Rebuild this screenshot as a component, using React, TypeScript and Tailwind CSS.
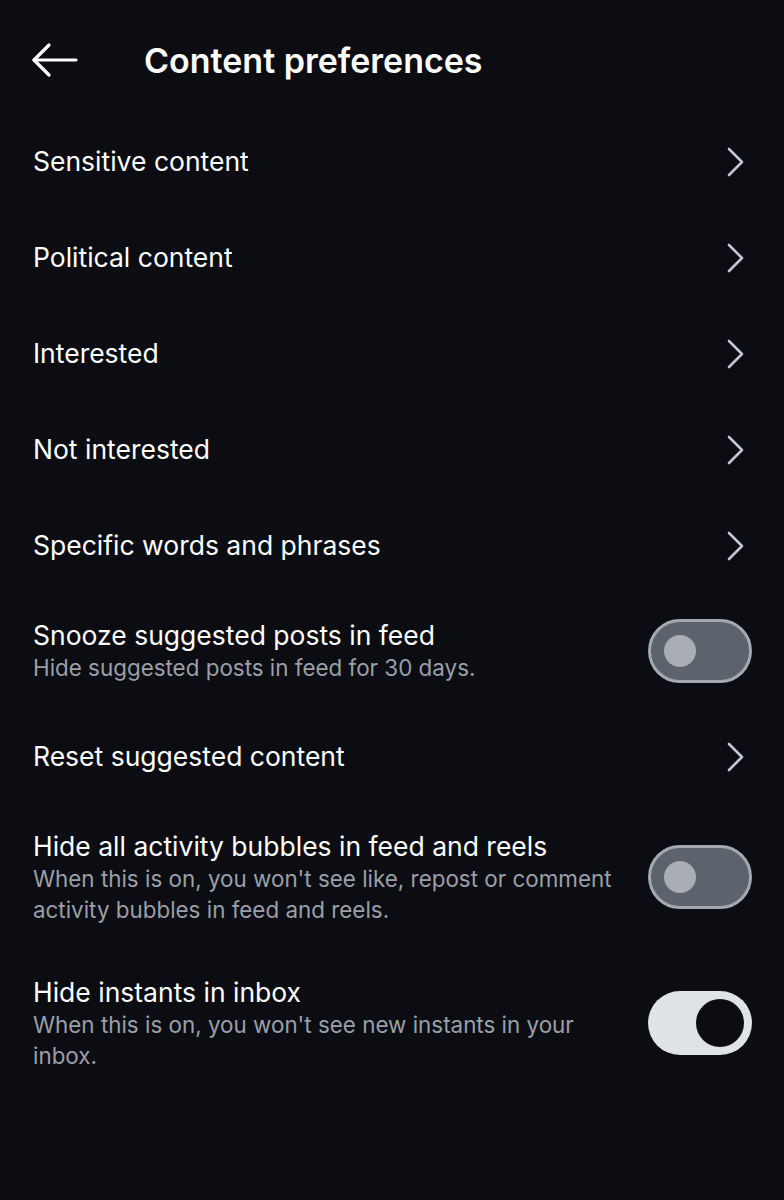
import { useState } from 'react'

const font = { fontFamily: 'Inter, "Noto Sans", sans-serif' }

function BackArrow() {
  return (
    <svg width="48" height="36" viewBox="0 0 48 36" fill="none" stroke="#ffffff" strokeWidth="3.2" strokeLinecap="round" strokeLinejoin="round">
      <path d="M3 18 H45" />
      <path d="M18 3 L3 18 L18 33" />
    </svg>
  )
}

function Chevron() {
  return (
    <svg width="20" height="30" viewBox="0 0 20 30" fill="none" stroke="#c3c7ce" strokeWidth="2.6" strokeLinecap="round" strokeLinejoin="round">
      <path d="M3 2 L16 15 L3 28" />
    </svg>
  )
}

function Toggle({ on, onClick }: { on: boolean; onClick: () => void }) {
  if (on) {
    return (
      <button onClick={onClick} className="flex h-[64px] w-[104px] shrink-0 items-center justify-end rounded-full bg-[#dfe2e6] pr-[8px]">
        <span className="h-[48px] w-[48px] rounded-full bg-[#0b0d12]" />
      </button>
    )
  }
  return (
    <button onClick={onClick} className="flex h-[64px] w-[104px] shrink-0 items-center rounded-full border-[3px] border-[#a4a9b1] bg-[#5d636c] pl-[13px]">
      <span className="h-[32px] w-[32px] rounded-full bg-[#a9aeb6]" />
    </button>
  )
}

function NavRow({ label }: { label: string }) {
  return (
    <div className="flex h-[96px] items-center justify-between pl-[33px] pr-[38px]">
      <span className="text-[26.5px] text-white">{label}</span>
      <Chevron />
    </div>
  )
}

function ToggleRow({ title, desc, on, onClick, pad }: { title: string; desc: string; on: boolean; onClick: () => void; pad: string }) {
  return (
    <div className={'flex items-center justify-between pl-[33px] pr-[32px] ' + pad}>
      <div className="flex w-[595px] flex-col">
        <span className="text-[26.5px] leading-[34px] text-white">{title}</span>
        <span className="text-[22.4px] leading-[31px] text-[#9a9fa8]">{desc}</span>
      </div>
      <Toggle on={on} onClick={onClick} />
    </div>
  )
}

export default function App() {
  const [snooze, setSnooze] = useState(false)
  const [bubbles, setBubbles] = useState(false)
  const [instants, setInstants] = useState(true)

  return (
    <div className="min-h-[1200px] w-[784px] bg-[#0b0d12]" style={font}>
      <div className="flex h-[114px] items-center pl-[31px] pt-[6px]">
        <BackArrow />
        <h1 className="ml-[65px] text-[34px] font-semibold text-white">Content preferences</h1>
      </div>

      <NavRow label="Sensitive content" />
      <NavRow label="Political content" />
      <NavRow label="Interested" />
      <NavRow label="Not interested" />
      <NavRow label="Specific words and phrases" />

      <ToggleRow
        title="Snooze suggested posts in feed"
        desc="Hide suggested posts in feed for 30 days."
        on={snooze}
        onClick={() => setSnooze(!snooze)}
        pad="pt-6 pb-[26px]"
      />

      <NavRow label="Reset suggested content" />

      <ToggleRow
        title="Hide all activity bubbles in feed and reels"
        desc="When this is on, you won't see like, repost or comment activity bubbles in feed and reels."
        on={bubbles}
        onClick={() => setBubbles(!bubbles)}
        pad="pt-6 pb-6"
      />
      <ToggleRow
        title="Hide instants in inbox"
        desc="When this is on, you won't see new instants in your inbox."
        on={instants}
        onClick={() => setInstants(!instants)}
        pad="pt-[26px] pb-6"
      />
    </div>
  )
}
